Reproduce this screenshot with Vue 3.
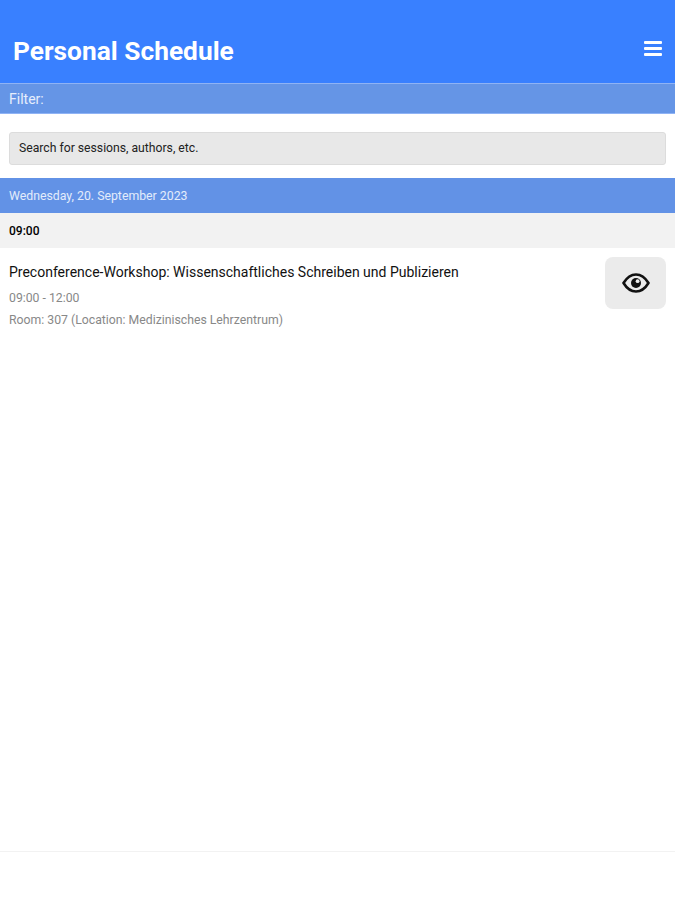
<template>
  <div class="page">
    <header class="app-header">
      <h1 class="app-title">Personal Schedule</h1>
      <button class="menu-btn" aria-label="Menu">
        <span></span>
        <span></span>
        <span></span>
      </button>
    </header>

    <div class="filter-label">Filter:</div>
    <div class="search-wrap">
      <input class="search-input" type="text" placeholder="Search for sessions, authors, etc." />
    </div>

    <div class="day-bar">Wednesday, 20. September 2023</div>
    <div class="time-bar">09:00</div>

    <div class="session" v-for="session in sessions" :key="session.title">
      <div class="session-info">
        <div class="session-title">{{ session.title }}</div>
        <div class="session-time">{{ session.time }}</div>
        <div class="session-room">{{ session.room }}</div>
      </div>
      <button class="view-btn" aria-label="View">
        <svg width="28" height="20" viewBox="0 0 28 20" fill="none">
          <path d="M1.500 10C5 4.300 9 1.500 14 1.500S23 4.300 26.500 10C23 15.700 19 18.500 14 18.500S5 15.700 1.500 10Z" stroke="#111" stroke-width="2.600" stroke-linejoin="round"></path>
          <circle cx="14" cy="10" r="5" fill="#111"></circle>
          <circle cx="15.600" cy="8.200" r="1.900" fill="#ebebeb"></circle>
        </svg>
      </button>
    </div>

    <div class="spacer"></div>
    <div class="bottom-area"></div>
  </div>
</template>

<script setup>
const sessions = [
  {
    title: 'Preconference-Workshop: Wissenschaftliches Schreiben und Publizieren',
    time: '09:00 - 12:00',
    room: 'Room: 307 (Location: Medizinisches Lehrzentrum)'
  }
];
</script>

<style>
body {
  background: #fff;
}
</style>

<style scoped>
.page {
  height: 900px;
  display: flex;
  flex-direction: column;
  font-family: Roboto, "Liberation Sans", sans-serif;
  background: #fff;
  overflow: hidden;
}

.app-header {
  height: 83px;
  flex: none;
  box-sizing: border-box;
  background: #3980ff;
  padding: 36px 13px 0 13px;
  display: flex;
  justify-content: space-between;
  align-items: flex-start;
}

.app-title {
  margin: 0;
  color: #fff;
  font-size: 26.300px;
  line-height: 30px;
  font-weight: 700;
}

.menu-btn {
  width: 18px;
  margin: 5px 0 0;
  padding: 0;
  border: none;
  background: transparent;
  display: flex;
  flex-direction: column;
  gap: 3px;
}

.menu-btn span {
  display: block;
  height: 3px;
  border-radius: 1px;
  background: #fff;
}

.filter-label {
  height: 31px;
  flex: none;
  box-sizing: border-box;
  padding-left: 9px;
  background: #6595e6;
  border-top: 1px solid #8fb3f5;
  border-bottom: 1px solid #8fb3f5;
  color: #e6eefc;
  font-size: 14px;
  line-height: 31px;
}

.search-wrap {
  flex: none;
  height: 64px;
  box-sizing: border-box;
  padding: 18px 9px 0;
}

.search-input {
  display: block;
  width: 100%;
  height: 33px;
  box-sizing: border-box;
  padding: 0 9px 2px;
  border: 1px solid #dcdcdc;
  border-radius: 3px;
  background: #e8e8e8;
  font-family: inherit;
  font-size: 12.200px;
}

.search-input::placeholder {
  color: #222;
  opacity: 1;
}

.day-bar {
  height: 35px;
  flex: none;
  box-sizing: border-box;
  padding: 1px 0 0 9px;
  background: #6292e6;
  color: #e3ecfb;
  font-size: 12.300px;
  line-height: 34px;
}

.time-bar {
  height: 35px;
  flex: none;
  box-sizing: border-box;
  padding: 1px 0 0 9px;
  background: #f2f2f2;
  color: #000;
  font-size: 12px;
  font-weight: 500;
  line-height: 34px;
}

.session {
  display: flex;
  justify-content: space-between;
  align-items: flex-start;
  padding: 9px 9px 0;
}

.session-title {
  margin-top: 6px;
  font-size: 14px;
  line-height: 18px;
  color: #111;
}

.session-time {
  margin-top: 9px;
  font-size: 12.250px;
  line-height: 17px;
  color: #888;
}

.session-room {
  margin-top: 5px;
  font-size: 12.250px;
  line-height: 17px;
  color: #888;
}

.view-btn {
  width: 61px;
  height: 52px;
  padding: 0;
  border: none;
  border-radius: 8px;
  background: #ebebeb;
  display: flex;
  align-items: center;
  justify-content: center;
}

.spacer {
  flex: 1;
}

.bottom-area {
  flex: none;
  height: 48px;
  border-top: 1px solid #f2f2f2;
}
</style>
